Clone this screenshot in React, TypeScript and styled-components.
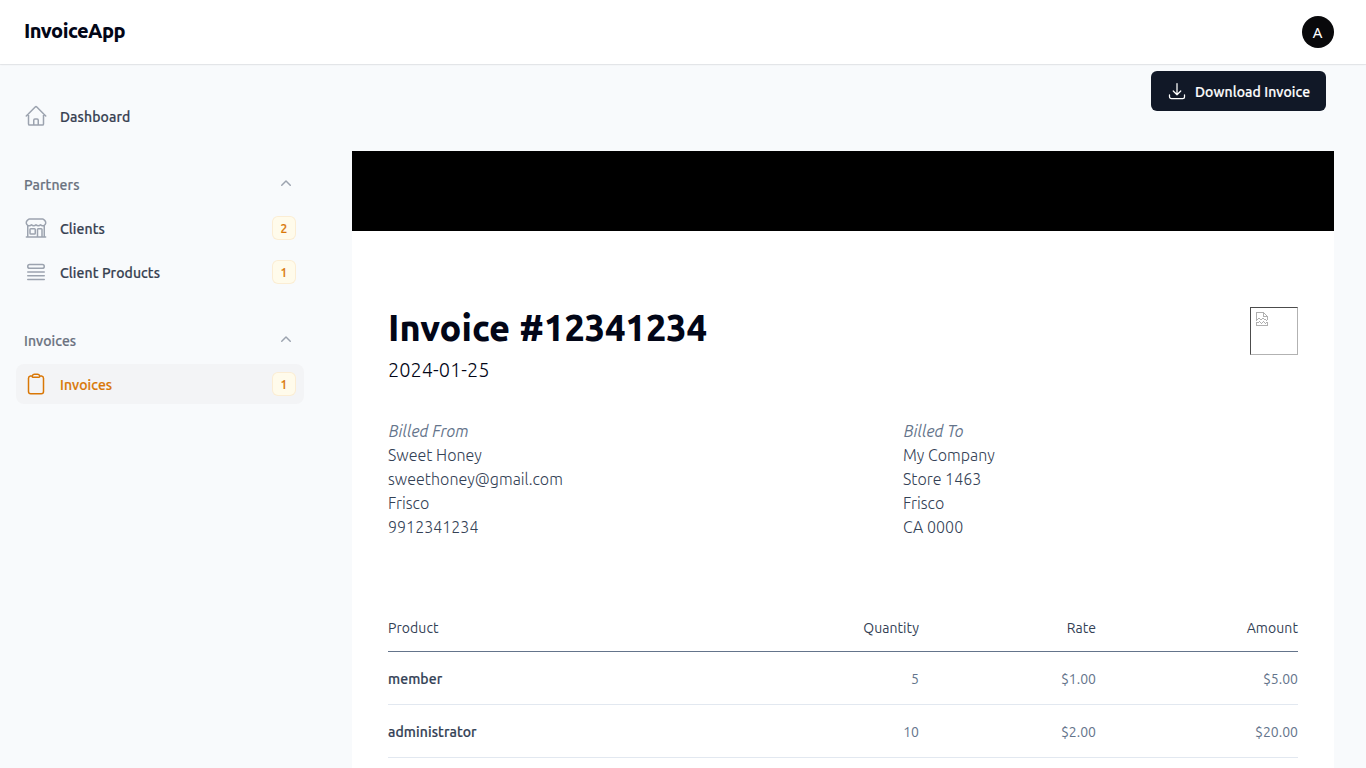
import React from 'react';
import styled, { createGlobalStyle, css } from 'styled-components';
import {
  HiOutlineHome,
  HiOutlineBuildingStorefront,
  HiOutlineQueueList,
  HiOutlineClipboard,
  HiOutlineArrowDownTray,
  HiMiniChevronUp,
} from 'react-icons/hi2';

const GlobalStyle = createGlobalStyle`
  *, *::before, *::after { box-sizing: border-box; }
  html, body { margin: 0; padding: 0; height: 100%; overflow: hidden; }
  body {
    background: #f8fafc;
    color: #020617;
    font-family: Ubuntu, "Noto Sans", "Open Sans", sans-serif;
    font-size: 16px;
  }
`;

const mediumText = css`
  font-weight: 500;
  letter-spacing: 0.1px;
  -webkit-text-stroke: 0.2px currentColor;
`;

const Page = styled.div`
  height: 768px;
  display: flex;
  flex-direction: column;
  overflow: hidden;
`;

const Topbar = styled.header`
  height: 64px;
  flex: none;
  display: flex;
  align-items: center;
  justify-content: space-between;
  padding: 0 32px 0 24px;
  background: #fff;
  box-shadow: 0 0 0 1px rgba(3, 7, 18, 0.05), 0 1px 2px rgba(0, 0, 0, 0.05);
`;

const Brand = styled.div`
  font-size: 20px;
  font-weight: 800;
  line-height: 20px;
  letter-spacing: -0.5px;
  padding-bottom: 2px;
`;

const Avatar = styled.div`
  width: 32px;
  height: 32px;
  border-radius: 50%;
  background: #09090b;
  color: #fff;
  font-family: "Noto Sans", sans-serif;
  font-size: 15px;
  font-weight: 400;
  line-height: 32px;
  text-align: center;
  padding-right: 1px;
`;

const Body = styled.div`
  flex: 1;
  min-height: 0;
  display: flex;
`;

const Sidebar = styled.nav`
  width: 320px;
  flex: none;
  padding: 32px 16px;
  display: flex;
  flex-direction: column;
  gap: 28px;
`;

const Group = styled.div`
  display: flex;
  flex-direction: column;
  gap: 4px;
`;

const GroupHeader = styled.div`
  height: 40px;
  padding: 0 8px;
  display: flex;
  align-items: center;
  justify-content: space-between;
  color: #6b7280;
  font-size: 14px;
  line-height: 24px;
  ${mediumText}

  svg {
    width: 20px;
    height: 20px;
    color: #9ca3af;
  }
`;

const NavItem = styled.a<{ $active?: boolean }>`
  height: 40px;
  padding: 0 8px;
  border-radius: 8px;
  display: flex;
  align-items: center;
  gap: 12px;
  background: ${(p) => (p.$active ? '#f3f4f6' : 'transparent')};
  color: ${(p) => (p.$active ? '#d97706' : '#374151')};
  font-size: 14px;
  line-height: 20px;
  ${mediumText}

  svg {
    width: 24px;
    height: 24px;
    color: ${(p) => (p.$active ? '#d97706' : '#9ca3af')};
  }
`;

const NavLabel = styled.span`
  flex: 1;
  padding-top: 2px;
`;

const GroupLabel = styled.span`
  padding-top: 2px;
`;

const Badge = styled.span`
  width: 24px;
  height: 24px;
  border-radius: 6px;
  background: #fffbeb;
  box-shadow: inset 0 0 0 1px rgba(217, 119, 6, 0.1);
  color: #d97706;
  font-size: 12px;
  line-height: 16px;
  padding-top: 1px;
  display: grid;
  place-items: center;
`;

const Main = styled.main`
  flex: 1;
  min-width: 0;
  padding: 7px 32px 0;
`;

const Actions = styled.div`
  display: flex;
  justify-content: flex-end;
  padding: 0 8px 40px 0;
`;

const DownloadButton = styled.button`
  width: 175px;
  height: 40px;
  padding: 0 16px;
  border: 0;
  border-radius: 6px;
  background: #111827;
  color: #fff;
  font: inherit;
  font-size: 14px;
  line-height: 20px;
  ${mediumText}
  white-space: nowrap;
  display: flex;
  align-items: center;
  gap: 8px;

  svg {
    width: 20px;
    height: 20px;
    flex: none;
  }
`;

const ButtonLabel = styled.span`
  padding-top: 2px;
`;

const Sheet = styled.section`
  background: #fff;
  height: 800px;
`;

const Band = styled.div`
  height: 80px;
  background: #000;
`;

const SheetBody = styled.div`
  padding: 76px 36px 0;
`;

const Heading = styled.div`
  height: 112px;
  display: flex;
  justify-content: space-between;
  align-items: flex-start;
`;

const Title = styled.h1`
  margin: 0;
  font-size: 36px;
  font-weight: 800;
  line-height: 41px;
  letter-spacing: 0.07px;
`;

const IssueDate = styled.div`
  margin-top: 8px;
  font-size: 20px;
  line-height: 28px;
  font-weight: 300;
`;

const LogoFrame = styled.div`
  width: 48px;
  height: 48px;
  border: 1px solid #b2b2b2;
  border-top-color: #4c4c4c;
  border-left-color: #4c4c4c;
  padding: 4px 5px;

  svg { display: block; }
`;

const Parties = styled.div`
  display: grid;
  grid-template-columns: 515px 1fr;
`;

const Party = styled.address`
  font-style: normal;
  font-weight: 300;
  font-size: 16px;
  line-height: 24px;
  letter-spacing: 0.02px;
  color: #334155;
`;

const PartyRole = styled.div`
  font-style: italic;
  font-weight: 400;
  letter-spacing: 0;
  padding-left: 0.7px;
  color: #64748b;
`;

const Table = styled.div`
  margin-top: 64px;
  font-size: 14px;
  line-height: 20px;
`;

const Row = styled.div<{ $head?: boolean }>`
  display: grid;
  grid-template-columns: 1fr 177px 177px 202px;
  padding: ${(p) => (p.$head ? '15px 0 13px' : '17px 0 15px')};
  border-bottom: 1px solid ${(p) => (p.$head ? '#64748b' : '#e2e8f0')};
  color: ${(p) => (p.$head ? '#334155' : '#64748b')};
  letter-spacing: ${(p) => (p.$head ? '0.07px' : '0')};
`;

const Product = styled.div<{ $strong?: boolean }>`
  color: #334155;
  ${(p) => p.$strong && mediumText}
`;

const Cell = styled.div`
  text-align: right;
`;

const BrokenImage = () => (
  <svg width="12" height="14" viewBox="0 0 12 14" fill="none" stroke="#b0b0b0" shapeRendering="crispEdges">
    <path d="M0.5 8V0.5H7.5L11.5 4.5V8M7.5 0.5V4.5H11.5" />
    <path d="M0 8.5h1M1 7.5h1M2 6.5h2M4 7.5h2M6 6.5h2M8 7.5h2M10 8.5h1" />
    <path d="M0.5 10V13.5H11.5V10M1 10.5h2M3 9.5h1M4 10.5h1M5 11.5h1M6 10.5h1M7 9.5h1M8 10.5h1M9 11.5h1M10 10.5h1" />
  </svg>
);

const billing = [
  { role: 'Billed From', lines: ['Sweet Honey', 'sweethoney@gmail.com', 'Frisco', '9912341234'] },
  { role: 'Billed To', lines: ['My Company', 'Store 1463', 'Frisco', 'CA 0000'] },
];

const products = [
  { name: 'member', quantity: '5', rate: '$1.00', amount: '$5.00' },
  { name: 'administrator', quantity: '10', rate: '$2.00', amount: '$20.00' },
];

export default function App() {
  return (
    <Page>
      <GlobalStyle />
      <Topbar>
        <Brand>InvoiceApp</Brand>
        <Avatar>A</Avatar>
      </Topbar>
      <Body>
        <Sidebar>
          <NavItem><HiOutlineHome /><NavLabel>Dashboard</NavLabel></NavItem>
          <Group>
            <GroupHeader><GroupLabel>Partners</GroupLabel><HiMiniChevronUp /></GroupHeader>
            <NavItem><HiOutlineBuildingStorefront /><NavLabel>Clients</NavLabel><Badge>2</Badge></NavItem>
            <NavItem><HiOutlineQueueList /><NavLabel>Client Products</NavLabel><Badge>1</Badge></NavItem>
          </Group>
          <Group>
            <GroupHeader><GroupLabel>Invoices</GroupLabel><HiMiniChevronUp /></GroupHeader>
            <NavItem $active><HiOutlineClipboard /><NavLabel>Invoices</NavLabel><Badge>1</Badge></NavItem>
          </Group>
        </Sidebar>
        <Main>
          <Actions>
            <DownloadButton><HiOutlineArrowDownTray /><ButtonLabel>Download Invoice</ButtonLabel></DownloadButton>
          </Actions>
          <Sheet>
            <Band />
            <SheetBody>
              <Heading>
                <div>
                  <Title>Invoice #12341234</Title>
                  <IssueDate>2024-01-25</IssueDate>
                </div>
                <LogoFrame><BrokenImage /></LogoFrame>
              </Heading>
              <Parties>
                {billing.map((party) => (
                  <Party key={party.role}>
                    <PartyRole>{party.role}</PartyRole>
                    {party.lines.map((line) => <div key={line}>{line}</div>)}
                  </Party>
                ))}
              </Parties>
              <Table>
                <Row $head>
                  <Product>Product</Product>
                  <Cell>Quantity</Cell>
                  <Cell>Rate</Cell>
                  <Cell>Amount</Cell>
                </Row>
                {products.map((item) => (
                  <Row key={item.name}>
                    <Product $strong>{item.name}</Product>
                    <Cell>{item.quantity}</Cell>
                    <Cell>{item.rate}</Cell>
                    <Cell>{item.amount}</Cell>
                  </Row>
                ))}
              </Table>
            </SheetBody>
          </Sheet>
        </Main>
      </Body>
    </Page>
  );
}
